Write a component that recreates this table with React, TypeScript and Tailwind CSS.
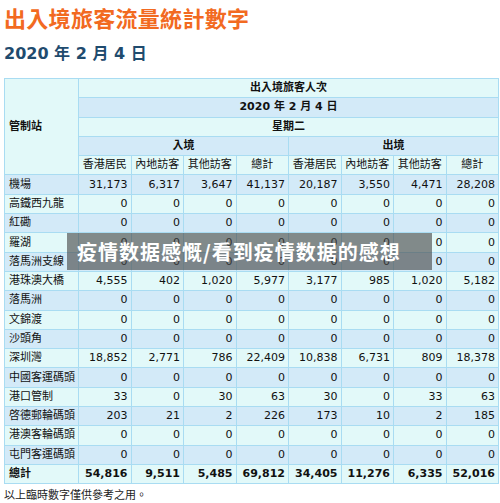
const zero = ['0', '0', '0', '0', '0', '0', '0', '0'];

const rows: [string, string[]][] = [
  ['機場', ['31,173', '6,317', '3,647', '41,137', '20,187', '3,550', '4,471', '28,208']],
  ['高鐵西九龍', zero],
  ['紅磡', zero],
  ['羅湖', zero],
  ['落馬洲支線', zero],
  ['港珠澳大橋', ['4,555', '402', '1,020', '5,977', '3,177', '985', '1,020', '5,182']],
  ['落馬洲', zero],
  ['文錦渡', zero],
  ['沙頭角', zero],
  ['深圳灣', ['18,852', '2,771', '786', '22,409', '10,838', '6,731', '809', '18,378']],
  ['中國客運碼頭', zero],
  ['港口管制', ['33', '0', '30', '63', '30', '0', '33', '63']],
  ['啓德郵輪碼頭', ['203', '21', '2', '226', '173', '10', '2', '185']],
  ['港澳客輪碼頭', zero],
  ['屯門客運碼頭', zero],
];

const totals = ['54,816', '9,511', '5,485', '69,812', '34,405', '11,276', '6,335', '52,016'];
const groupCols = ['香港居民', '內地訪客', '其他訪客', '總計'];

const cell = 'border border-[#a9dcf2] h-[19.3px] p-0 leading-[18px]';
const cyan = 'bg-[#e2f9f9]';
const blue = 'bg-[#d3eaf8]';

export default function App() {
  return (
    <div className="relative w-[500px] h-[503px] bg-white overflow-hidden font-['DejaVu_Sans','Noto_Sans_CJK_TC',sans-serif] text-[#111]">
      <h1 className="pl-[4px] pt-[3px] h-[36px] text-[22px] leading-[28px] font-bold text-[#f26a21] font-['Noto_Sans_CJK_TC',sans-serif] tracking-[0.3px]">
        出入境旅客流量統計數字
      </h1>
      <h2 className="pl-[4px] h-[42px] pt-[7px] text-[16px] leading-[22px] font-bold text-[#1f4b6e]">
        2020 年 2 月 4 日
      </h2>

      <table className="ml-[4px] w-[495px] table-fixed border-collapse text-[11px]">
        <colgroup>
          <col className="w-[74px]" />
          {totals.map((_, i) => (
            <col key={i} />
          ))}
        </colgroup>
        <tbody>
          <tr>
            <td rowSpan={5} className={`${cell} ${cyan} pl-[4px] font-bold align-middle`}>
              管制站
            </td>
            <td colSpan={8} className={`${cell} ${cyan} text-center font-bold`}>
              出入境旅客人次
            </td>
          </tr>
          <tr>
            <td colSpan={8} className={`${cell} ${blue} text-center font-bold`}>
              2020 年 2 月 4 日
            </td>
          </tr>
          <tr>
            <td colSpan={8} className={`${cell} ${cyan} text-center font-bold`}>
              星期二
            </td>
          </tr>
          <tr>
            <td colSpan={4} className={`${cell} ${blue} text-center font-bold`}>
              入境
            </td>
            <td colSpan={4} className={`${cell} ${blue} text-center font-bold`}>
              出境
            </td>
          </tr>
          <tr>
            {[...groupCols, ...groupCols].map((c, i) => (
              <td key={i} className={`${cell} ${cyan} text-center whitespace-nowrap`}>
                {c}
              </td>
            ))}
          </tr>
          {rows.map(([name, vals], r) => (
            <tr key={name} className={r % 2 === 0 ? blue : cyan}>
              <td className={`${cell} pl-[4px] whitespace-nowrap`}>{name}</td>
              {vals.map((v, i) => (
                <td key={i} className={`${cell} text-right pr-[3px]`}>
                  {v}
                </td>
              ))}
            </tr>
          ))}
          <tr className={cyan}>
            <td className={`${cell} pl-[4px] font-bold`}>總計</td>
            {totals.map((v, i) => (
              <td key={i} className={`${cell} text-right pr-[3px] font-bold`}>
                {v}
              </td>
            ))}
          </tr>
        </tbody>
      </table>

      <p className="pl-[4px] pt-[4px] text-[11px] leading-[16px] text-[#222]">以上臨時數字僅供參考之用。</p>

      <div className="absolute left-[67px] top-[233px] w-[365px] h-[37px] bg-[rgba(70,70,70,0.62)] flex items-center pl-[10px]">
        <span className="text-white font-bold text-[20px] leading-none tracking-[1px] font-['Noto_Sans_CJK_SC',sans-serif]">
          疫情数据感慨/看到疫情数据的感想
        </span>
      </div>
    </div>
  );
}
